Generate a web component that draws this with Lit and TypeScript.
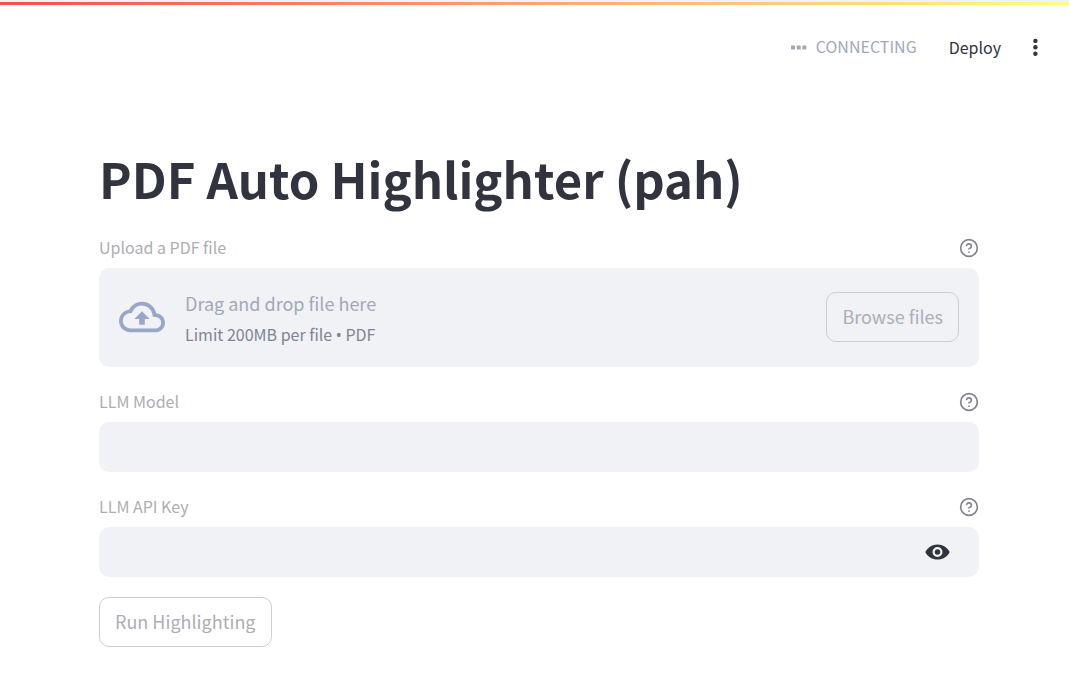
import { LitElement, html, css, svg } from "lit";
import { customElement, state } from "lit/decorators.js";

const helpIcon = svg`<svg class="help-icon" viewBox="0 0 24 24" aria-hidden="true">
  <circle cx="12" cy="12" r="10"></circle>
  <path d="M9.09 9a3 3 0 0 1 5.83 1c0 2-3 3-3 3M12 17h.01"></path>
</svg>`;

@customElement("app-root")
export class AppRoot extends LitElement {
  static styles = css`
    :host {
      display: block;
      min-height: 100vh;
      background: #ffffff;
      color: #31333f;
      font-family: "Source Sans Pro", "Noto Sans CJK SC", "Noto Sans", sans-serif;
      font-size: 18px;
      line-height: 30px;
    }
    * {
      box-sizing: border-box;
    }
    button,
    input {
      font: inherit;
      color: inherit;
    }
    .decoration {
      height: 5px;
      border-top: 2px solid #f0f2f6;
      background: linear-gradient(90deg, #ff4b4b, #fffd80);
    }
    .toolbar {
      display: flex;
      justify-content: flex-end;
      align-items: center;
      height: 84px;
      padding: 0 24px;
      font-size: 16px;
    }
    .status {
      display: flex;
      align-items: center;
      gap: 9px;
      margin-right: 32px;
      padding-bottom: 2px;
      color: #a3a8b8;
    }
    .status-icon {
      width: 16px;
      height: 5px;
      margin-top: 2px;
      fill: #a3a8b8;
    }
    .plain {
      display: flex;
      align-items: center;
      border: 0;
      padding: 0;
      background: none;
      cursor: pointer;
    }
    .menu {
      justify-content: center;
      width: 20px;
      height: 30px;
      margin-left: 24px;
    }
    .menu-icon {
      width: 6px;
      height: 18px;
      fill: #31333f;
    }
    main {
      padding: 57px 90px 38px 99px;
    }
    h1 {
      margin: 0 0 23px;
      font-size: 49px;
      font-weight: 700;
      line-height: 64px;
    }
    .field {
      margin-bottom: 20px;
    }
    .caption {
      display: flex;
      justify-content: space-between;
      align-items: center;
      height: 30px;
      margin-bottom: 5px;
      color: #adaeb2;
      font-size: 16px;
    }
    .caption label {
      padding-bottom: 2px;
    }
    .help {
      color: #83848c;
    }
    .help-icon {
      width: 20px;
      height: 20px;
      fill: none;
      stroke: currentColor;
      stroke-width: 2;
      stroke-linecap: round;
      stroke-linejoin: round;
    }
    .dropzone {
      display: flex;
      align-items: center;
      padding: 0 20px 1px;
      min-height: 99px;
      border-radius: 10px;
      background: #f0f2f6;
    }
    .cloud {
      flex: none;
      width: 46px;
      height: 46px;
      margin-right: 20px;
      fill: #98a6c8;
    }
    .instructions {
      flex: 1;
      padding-top: 3px;
      color: #a3a8b8;
    }
    .limit {
      margin-top: 1px;
      color: #808495;
      font-size: 16px;
    }
    .bullet {
      font-family: "Noto Sans", sans-serif;
      line-height: 1;
    }
    .button {
      height: 50px;
      padding: 0 15px 2px;
      border: 1px solid #cdced3;
      border-radius: 10px;
      background: transparent;
      color: #adaeb5;
    }
    .box {
      display: flex;
      align-items: center;
      height: 50px;
      border-radius: 10px;
      background: #f0f2f6;
    }
    .input {
      flex: 1;
      min-width: 0;
      height: 50px;
      padding: 0 15px;
      border: 0;
      outline: 0;
      background: none;
    }
    .reveal {
      margin-right: 29px;
    }
    .eye {
      width: 25px;
      height: 16px;
    }
  `;

  @state() private revealed = false;

  private caption(id: string, text: string) {
    return html`<div class="caption">
      <label for=${id}>${text}</label>
      <button class="plain help" aria-label="Help for ${text}">${helpIcon}</button>
    </div>`;
  }

  render() {
    return html`
      <header>
        <div class="decoration"></div>
        <div class="toolbar">
          <div class="status">
            <svg class="status-icon" viewBox="0 0 16 5" aria-hidden="true">
              <path d="M0 .5h4v4H0zM5.7 .5h4v4h-4zM11.4 .5h4v4h-4z"></path>
            </svg>
            <span>CONNECTING</span>
          </div>
          <button class="plain">Deploy</button>
          <button class="plain menu" aria-label="Main menu">
            <svg class="menu-icon" viewBox="0 0 6 18" aria-hidden="true">
              <circle cx="3.4" cy="2.9" r="2.2"></circle>
              <circle cx="3.4" cy="9.3" r="2.2"></circle>
              <circle cx="3.4" cy="15.7" r="2.2"></circle>
            </svg>
          </button>
        </div>
      </header>
      <main>
        <h1>PDF Auto Highlighter (pah)</h1>

        <div class="field">
          ${this.caption("browse", "Upload a PDF file")}
          <section class="dropzone">
            <svg class="cloud" viewBox="0 0 24 24" aria-hidden="true">
              <path
                d="M19.35 10.04A7.49 7.49 0 0 0 12 4C9.11 4 6.6 5.64 5.35 8.04A5.994 5.994 0 0 0 0 14c0 3.31 2.69 6 6 6h13c2.76 0 5-2.24 5-5 0-2.64-2.05-4.78-4.65-4.96zM19 18H6c-2.21 0-4-1.79-4-4 0-2.05 1.53-3.76 3.56-3.97l1.07-.11.5-.95A5.469 5.469 0 0 1 12 6c2.62 0 4.88 1.86 5.39 4.43l.3 1.5 1.53.11A2.98 2.98 0 0 1 22 15c0 1.65-1.35 3-3 3zM8 13h2.55v3h2.9v-3H16l-4-4z"
              ></path>
            </svg>
            <div class="instructions">
              <div>Drag and drop file here</div>
              <div class="limit">Limit 200MB per file <span class="bullet">•</span> PDF</div>
            </div>
            <button id="browse" class="button" disabled>Browse files</button>
          </section>
        </div>

        <div class="field">
          ${this.caption("model", "LLM Model")}
          <div class="box"><input id="model" class="input" type="text" disabled /></div>
        </div>

        <div class="field">
          ${this.caption("key", "LLM API Key")}
          <div class="box">
            <input id="key" class="input" type=${this.revealed ? "text" : "password"} disabled />
            <button
              class="plain reveal"
              aria-label="Show password text"
              @click=${() => (this.revealed = !this.revealed)}
            >
              <svg class="eye" viewBox="0 0 25 16" aria-hidden="true">
                <path fill="#31333f" d="M.3 8C2.6 3.3 7.2 .4 12.5 .4S22.4 3.3 24.7 8C22.4 12.7 17.8 15.6 12.5 15.6S2.6 12.7 .3 8z"></path>
                <circle cx="12.5" cy="8" r="3.9" fill="none" stroke="#f0f2f6" stroke-width="2.2"></circle>
              </svg>
            </button>
          </div>
        </div>

        <button class="button" disabled>Run Highlighting</button>
      </main>
    `;
  }
}
